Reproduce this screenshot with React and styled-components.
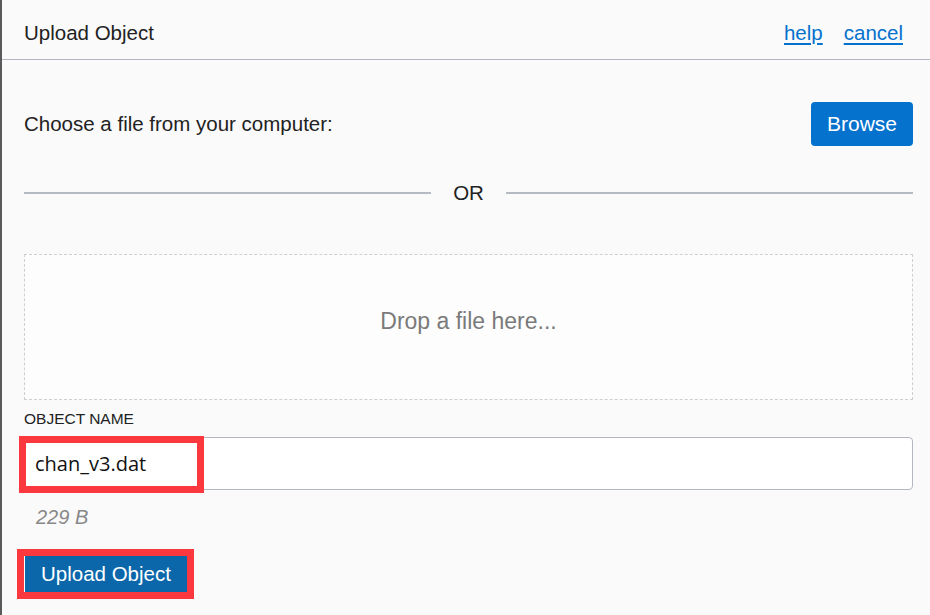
import React from 'react';
import styled, { createGlobalStyle } from 'styled-components';

const GlobalStyle = createGlobalStyle`
    html, body {
        margin: 0;
        padding: 0;
        background: #fafafa;
    }
    body {
        font-family: "Liberation Sans", Arial, sans-serif;
        color: #222;
    }
`;

const Dialog = styled.div`
    min-height: 615px;
    box-sizing: border-box;
    border-left: 2px solid #5a5a5a;
    background: #fafafa;
`;

const Header = styled.div`
    display: flex;
    align-items: center;
    justify-content: space-between;
    height: 59px;
    padding: 0 27px 0 22px;
    border-bottom: 1px solid #b3b7bf;
`;

const Title = styled.span`
    font-size: 20.5px;
    color: #222;
    padding-top: 6px;
`;

const Links = styled.div`
    display: flex;
    gap: 21px;
    padding-top: 6px;
`;

const Link = styled.a`
    font-size: 20.5px;
    color: #0572ce;
    text-decoration: underline;
    text-underline-offset: 3px;
    cursor: pointer;
`;

const Body = styled.div`
    display: flex;
    flex-direction: column;
    padding: 42px 17px 0 22px;
`;

const ChooseRow = styled.div`
    display: flex;
    align-items: center;
    justify-content: space-between;
`;

const Label = styled.span`
    font-size: 20.5px;
    color: #222;
`;

const Button = styled.button`
    font-family: "Liberation Sans", Arial, sans-serif;
    font-size: ${p => p.$small ? '20.5px' : '21px'};
    color: #fff;
    background: ${p => p.$dark ? '#0b67aa' : '#0572ce'};
    border: none;
    border-radius: ${p => p.$dark ? '0' : '4px'};
    height: ${p => p.$dark ? '36px' : '44px'};
    padding: 0 ${p => p.$dark ? '16px' : '16px'};
    cursor: pointer;
`;

const Divider = styled.div`
    display: flex;
    align-items: center;
    gap: 22px;
    margin-top: 35px;
    height: 24px;
`;

const Line = styled.div`
    flex: 1;
    height: 2px;
    background: #b6bac3;
`;

const OrText = styled.span`
    font-size: 20.5px;
    color: #222;
`;

const DropZone = styled.div`
    display: flex;
    align-items: center;
    justify-content: center;
    box-sizing: border-box;
    height: 146px;
    margin-top: 49px;
    padding-bottom: 12px;
    border: 1px dashed #cfcfcf;
    background: #fdfdfd;
    font-size: 23px;
    color: #7a7a7a;
`;

const FieldLabel = styled.div`
    margin-top: 10px;
    font-size: 15.5px;
    color: #222;
    text-transform: uppercase;
    line-height: 18px;
`;

const InputWrap = styled.div`
    position: relative;
    margin-top: 9px;
`;

const Input = styled.input`
    display: block;
    box-sizing: border-box;
    width: 100%;
    height: 53px;
    padding: 0 10px;
    border: 1px solid #b3b7bf;
    border-radius: 4px;
    background: #fff;
    font-family: "Open Sans", "Noto Sans", sans-serif;
    font-size: 20px;
    color: #111;
    outline: none;
`;

const Highlight = styled.div`
    position: absolute;
    left: -5px;
    top: -1px;
    width: 185px;
    height: 57px;
    box-sizing: border-box;
    border: 7px solid #fa383e;
    pointer-events: none;
`;

const Size = styled.div`
    margin-top: 16px;
    padding-left: 12px;
    font-size: 20px;
    font-style: italic;
    color: #888;
`;

const Footer = styled.div`
    margin-top: 27px;
`;

const UploadButton = styled(Button)`
    outline: 7px solid #fa383e;
    border-left: 1px solid #fff;
`;

function App() {
    return (
        <Dialog>
            <GlobalStyle />
            <Header>
                <Title>Upload Object</Title>
                <Links>
                    <Link>help</Link>
                    <Link>cancel</Link>
                </Links>
            </Header>
            <Body>
                <ChooseRow>
                    <Label>Choose a file from your computer:</Label>
                    <Button>Browse</Button>
                </ChooseRow>
                <Divider>
                    <Line />
                    <OrText>OR</OrText>
                    <Line />
                </Divider>
                <DropZone>Drop a file here...</DropZone>
                <FieldLabel>Object Name</FieldLabel>
                <InputWrap>
                    <Input defaultValue="chan_v3.dat" />
                    <Highlight />
                </InputWrap>
                <Size>229 B</Size>
                <Footer>
                    <UploadButton $dark $small>Upload Object</UploadButton>
                </Footer>
            </Body>
        </Dialog>
    );
}

export default App;
